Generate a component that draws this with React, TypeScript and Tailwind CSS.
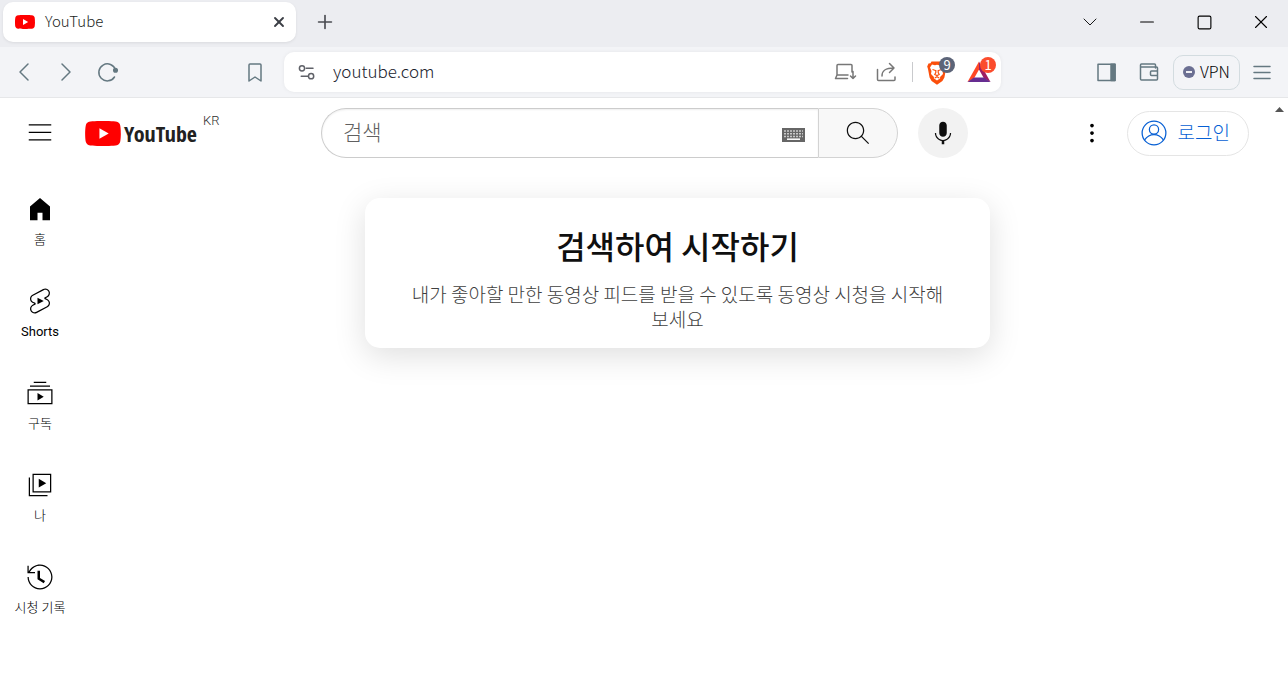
import type { ReactNode } from "react";
import { ChevronDown, Minus, Plus, Square, X } from "lucide-react";

const sideItems = [
  { label: "홈", weight: "font-light", path: "M4 21V10.08l8-6.96 8 6.96V21h-6v-6h-4v6H4z" },
  {
    label: "Shorts",
    weight: "font-normal",
    path: "M10 14.65v-5.3L15 12l-5 2.65zm7.77-4.33-1.2-.5L18 9.06c1.84-.96 2.53-3.23 1.56-5.06s-3.24-2.53-5.07-1.56L6 6.94c-1.29.68-2.07 2.04-2 3.49.07 1.42.93 2.67 2.22 3.25.03.01 1.2.5 1.2.5L6 14.93c-1.83.97-2.53 3.24-1.56 5.07.97 1.83 3.24 2.53 5.07 1.56l8.5-4.5c1.29-.68 2.06-2.04 1.99-3.49-.07-1.42-.94-2.68-2.23-3.25zm-.23 5.86-8.5 4.5c-1.34.71-3.01.2-3.72-1.14-.71-1.34-.2-3.01 1.14-3.72l2.04-1.08v-1.21l-.69-.28-1.11-.46c-.99-.41-1.65-1.35-1.7-2.41-.05-1.06.52-2.06 1.46-2.56l8.5-4.5c1.34-.71 3.01-.2 3.72 1.14.71 1.34.2 3.01-1.14 3.72L15.5 9.26v1.21l1.8.74c.99.41 1.65 1.35 1.7 2.41.05 1.06-.52 2.06-1.46 2.56z",
  },
  {
    label: "구독",
    weight: "font-light",
    path: "M10 18v-6l5 3-5 3zm7-15H7v1h10V3zm3 3H4v1h16V6zm2 3H2v12h20V9zM3 10h18v10H3V10z",
  },
  {
    label: "나",
    weight: "font-light",
    path: "m11 7 6 3.5-6 3.5V7zm7 13H4V6H3v15h15v-1zm3-2H6V3h15v15zM7 17h13V4H7v13z",
  },
  {
    label: "시청 기록",
    weight: "font-light",
    path: "M14.97 16.95 10 13.87V7h2v5.76l4.03 2.49-1.06 1.7zM22 12c0 5.51-4.49 10-10 10S2 17.51 2 12h1c0 4.96 4.04 9 9 9s9-4.04 9-9-4.04-9-9-9C8.81 3 5.92 4.64 4.28 7.38c-.11.18-.22.37-.31.56L3.94 8H8v1H1.96V3h1v4.74c.04-.09.07-.17.11-.25.11-.22.23-.42.35-.63C5.22 3.86 8.51 2 12 2c5.51 0 10 4.49 10 10z",
  },
];

function YtIcon({ path }: { path: string }) {
  return (
    <svg viewBox="0 0 24 24" className="w-[30px] h-[30px] shrink-0" fill="currentColor">
      <path d={path} />
    </svg>
  );
}

function PlayBadge({ className }: { className: string }) {
  return (
    <svg viewBox="0 0 28.57 20" className={className}>
      <path
        fill="#f00"
        d="M27.97 3.12C27.64 1.89 26.68.93 25.45.6 23.22 0 14.29 0 14.29 0S5.35 0 3.12.6C1.89.93.93 1.89.6 3.12 0 5.35 0 10 0 10s0 4.65.6 6.88c.33 1.23 1.29 2.19 2.52 2.52C5.35 20 14.29 20 14.29 20s8.93 0 11.16-.6c1.23-.33 2.19-1.29 2.52-2.52.6-2.23.6-6.88.6-6.88s0-4.65-.6-6.88z"
      />
      <path fill="#fff" d="M11.43 14.29 18.85 10l-7.42-4.28v8.57z" />
    </svg>
  );
}

function ToolIcon({ label, children }: { label: string; children: ReactNode }) {
  return (
    <button aria-label={label} className="w-6 h-6 shrink-0">
      <svg viewBox="0 0 24 24" className="w-6 h-6" fill="none" stroke="currentColor" strokeWidth="1.5" strokeLinecap="round" strokeLinejoin="round">
        {children}
      </svg>
    </button>
  );
}

function WindowButton({ label, children }: { label: string; children: ReactNode }) {
  return (
    <button aria-label={label} className="flex items-center justify-center w-5 h-5">
      {children}
    </button>
  );
}

function TabStrip() {
  return (
    <div className="flex items-center h-[47px] pb-[3px] pl-[3px] bg-[#ecedf1]">
      <div className="flex items-center w-[293px] h-10 pl-3 pr-[9px] rounded-[10px] bg-white shadow-[0_1px_3px_rgba(0,0,0,0.08)]">
        <PlayBadge className="w-5 h-[14px]" />
        <span className="ml-[10px] mb-[2px] flex-1 text-[15px] leading-5 text-[#1d1f25]">YouTube</span>
        <button aria-label="탭 닫기">
          <X className="w-4 h-4 text-[#3b3e45]" strokeWidth={2.8} />
        </button>
      </div>
      <button aria-label="새 탭" className="ml-[18px]">
        <Plus className="w-[22px] h-[22px] text-[#4a4c52]" strokeWidth={1.8} />
      </button>
      <div className="ml-auto mr-[17px] flex items-center gap-[37px] text-black">
        <WindowButton label="탭 검색">
          <ChevronDown className="w-6 h-6 shrink-0" strokeWidth={0.9} />
        </WindowButton>
        <WindowButton label="최소화">
          <Minus className="w-[22px] h-[22px] shrink-0" strokeWidth={1.2} />
        </WindowButton>
        <WindowButton label="최대화">
          <Square className="w-[17px] h-[17px]" strokeWidth={1.6} />
        </WindowButton>
        <WindowButton label="닫기">
          <X className="w-[22px] h-[22px] shrink-0" strokeWidth={1.2} />
        </WindowButton>
      </div>
    </div>
  );
}

function AddressBar() {
  return (
    <div className="flex items-center flex-1 min-w-0 h-10 pl-[11px] pr-1 rounded-[10px] bg-white text-[#777] shadow-[0_0_4px_rgba(0,0,0,0.06)]">
      <ToolIcon label="사이트 정보">
        <g stroke="#5f6168">
          <circle cx="7" cy="8.3" r="2.6" />
          <path d="M11.2 8.3H18M6.200 16.200H13" />
          <circle cx="16.1" cy="16.2" r="2.6" />
        </g>
      </ToolIcon>
      <input
        aria-label="주소"
        defaultValue="youtube.com"
        className="ml-[14px] mb-[2px] flex-1 min-w-0 text-[17px] leading-6 text-[#20222e] outline-none"
      />
      <div className="flex items-center gap-[18px]">
        <ToolIcon label="앱 설치">
          <path d="M19 12V5.500a1 1 0 0 0-1-1H5a1 1 0 0 0-1 1v9.500h11M4 15l-1.500 3.500h12M20 11.500v7M17.500 16l2.500 2.500 2.500-2.500" />
        </ToolIcon>
        <ToolIcon label="공유">
          <path d="M2.500 9.500v10a1 1 0 0 0 1 1h15.500a1 1 0 0 0 1-1V17M7 16c0-5.500 3-8 12-8M14.500 3.500 19 8l-4.500 4.500" />
        </ToolIcon>
      </div>
      <span className="ml-[13px] w-px h-5 bg-[#c9cacd]" />
      <button aria-label="Brave Shields" className="relative ml-3 w-[26px] h-[30px]">
        <svg viewBox="0 0 26 30" className="w-[26px] h-[30px]">
          <path fill="#fb4f0b" d="M6.500 4.500h10l2 1.800 2 .2 1.300 3-.8 2.500-1.600 8.500-2 3.500-5.400 3.800-5.400-3.800-2-3.500L3 12l-.8-2.500 1.300-3 2-.2z" />
          <path fill="#fff" d="m7 7.500 3 .8 2-.6 2 .6 3-.8 2 3-1.500 3.500.5 3-3 3 .2 1.200L12 23.600l-3.200-2.400.2-1.200-3-3 .5-3L5 10.500z" />
          <path fill="none" stroke="#fb4f0b" strokeWidth="1.200" d="m7.500 12.500 3 1M16.500 12.500l-3 1M10.800 13v2.500l-1 2 2.200 1 2.200-1-1-2V13M9.800 21l2.200-1.200 2.200 1.200" />
        </svg>
        <span className="absolute left-[14px] top-0 w-4 h-4 rounded-full bg-[#5c6478] text-white text-[13px] leading-[15px] font-normal text-center">9</span>
      </button>
      <button aria-label="Brave Rewards" className="relative ml-4 w-[30px] h-[30px]">
        <svg viewBox="0 0 30 30" className="w-[30px] h-[30px]">
          <path fill="#ff4724" d="M12 4.500.500 25l6.500-3.500 5-9z" />
          <path fill="#9e1f63" d="M12 4.500 23.500 25 17 21.500l-5-9z" />
          <path fill="#662d91" d="M.500 25h23L17 20.500H7z" />
        </svg>
        <span className="absolute left-[13px] top-0 w-4 h-4 rounded-full bg-[#fb4c2d] text-white text-[13px] leading-[15px] font-normal text-center">1</span>
      </button>
    </div>
  );
}

function Toolbar() {
  return (
    <div className="flex items-center h-[51px] border-b border-[#e6e7e9] bg-[#f3f4f7] text-[#647881]">
      <div className="flex items-center w-[284px] shrink-0 pl-3 pr-[17px]">
        <ToolIcon label="뒤로">
          <path d="m16 4-8 8 8 8" />
        </ToolIcon>
        <span className="w-[18px]" />
        <ToolIcon label="앞으로">
          <path d="m8 4 8 8-8 8" />
        </ToolIcon>
        <span className="w-[18px]" />
        <ToolIcon label="새로고침">
          <path d="M18.500 17a8.500 8.500 0 1 1 1-7" />
          <circle cx="19.500" cy="10.300" r="1.800" fill="currentColor" />
        </ToolIcon>
        <span className="flex-1" />
        <ToolIcon label="북마크">
          <path d="M6 21V5a1 1 0 0 1 1-1h10a1 1 0 0 1 1 1v16l-6-4z" />
        </ToolIcon>
      </div>
      <AddressBar />
      <div className="flex items-center justify-end w-[287px] shrink-0 pr-[14px]">
        <ToolIcon label="사이드바">
          <path d="M3 4.200h17v16.300H3z" />
          <path fill="currentColor" d="M16 4.200h4v16.300h-4z" />
        </ToolIcon>
        <span className="w-[18px]" />
        <ToolIcon label="지갑">
          <path d="M18.500 8V5a1 1 0 0 0-1-1h-13a1 1 0 0 0-1 1v14a1 1 0 0 0 1 1h15a1 1 0 0 0 1-1V8a1 1 0 0 0-1-1H4M20.500 11h-6a1 1 0 0 0-1 1v2.500a1 1 0 0 0 1 1h6" />
        </ToolIcon>
        <button className="ml-3 mr-[10px] flex items-center gap-[5px] w-[67px] h-[35px] pl-[9px] rounded-[10px] border border-[#d3dce0] text-base leading-5 text-black">
          <svg viewBox="0 0 12 12" className="w-3 h-3 shrink-0">
            <circle cx="6" cy="6" r="6" fill="#6b6f92" />
            <path d="M3 6h6" stroke="#fff" strokeWidth="1.800" />
          </svg>
          <span className="mb-[2px]">VPN</span>
        </button>
        <ToolIcon label="메뉴">
          <path d="M4 6.500h16M4 12.500h16M4 18.500h16" />
        </ToolIcon>
      </div>
    </div>
  );
}

function SiteHeader() {
  return (
    <header className="flex items-center h-[70px]">
      <div className="flex items-center w-[321px] shrink-0 pl-[25px]">
        <button aria-label="가이드">
          <YtIcon path="M21 6H3V5h18v1zm0 5H3v1h18v-1zm0 6H3v1h18v-1z" />
        </button>
        <a href="#home" className="ml-[30px] flex items-center gap-[3px]">
          <PlayBadge className="w-9 h-[25px]" />
          <span className="font-['Noto_Sans_ExtraCondensed','Open_Sans_Condensed','Liberation_Sans_Narrow','Roboto_Condensed',sans-serif] text-[22px] leading-[26px] font-bold text-[#212121]">YouTube</span>
        </a>
        <span className="ml-[6px] mb-6 font-['Roboto',sans-serif] text-[13px] leading-4 font-light text-[#303030]">KR</span>
      </div>
      <div className="flex items-center flex-1 max-w-[647px]">
        <form className="flex flex-1 h-[50px]">
          <label className="flex flex-1 items-center pl-[21px] pr-[13px] rounded-l-full border border-r-0 border-[#ccc] shadow-[inset_0_1px_2px_#eee]">
            <input aria-label="검색" placeholder="검색" className="mb-1 flex-1 min-w-0 text-[21px] leading-[30px] outline-none placeholder:text-[#606060]" />
            <svg viewBox="0 0 23 14" className="w-[23px] h-[14px] mt-1">
              <path fill="#666" d="M0 0h23v14H0z" />
              <path stroke="#fff" strokeWidth="1.500" strokeDasharray="2 1" d="M2 3h19M2 5.800h19M2 8.500h19" opacity=".65" />
              <path stroke="#fff" strokeWidth="1.500" d="M5 11.200h13" />
            </svg>
          </label>
          <button aria-label="검색 실행" className="flex items-center justify-center w-20 rounded-r-full border border-[#d3d3d3] bg-[#f8f8f8] text-[#0f0f0f]">
            <YtIcon path="m20.870 20.170-5.590-5.590C16.350 13.350 17 11.750 17 10c0-3.870-3.130-7-7-7s-7 3.130-7 7 3.130 7 7 7c1.750 0 3.350-.65 4.580-1.710l5.590 5.590.7-.71zM10 16c-3.310 0-6-2.690-6-6s2.690-6 6-6 6 2.690 6 6-2.690 6-6 6z" />
          </button>
        </form>
        <button aria-label="음성으로 검색" className="ml-5 flex items-center justify-center w-[50px] h-[50px] rounded-full bg-[#f2f2f2] text-[#0f0f0f]">
          <YtIcon path="M12 3c-1.660 0-3 1.370-3 3.070v5.860C9 13.630 10.340 15 12 15s3-1.370 3-3.070V6.070C15 4.370 13.660 3 12 3zm6.500 9h-1c0 3.030-2.470 5.500-5.500 5.500S6.500 15.030 6.500 12h-1c0 3.240 2.390 5.930 5.500 6.410V21h2v-2.590c3.110-.48 5.500-3.170 5.500-6.410z" />
        </button>
      </div>
      <div className="flex items-center gap-5 ml-auto pr-[22px]">
        <button aria-label="설정">
          <YtIcon path="M12 16.500c.83 0 1.500.67 1.500 1.500s-.67 1.500-1.500 1.500-1.500-.67-1.500-1.500.67-1.500 1.500-1.500zM10.500 12c0 .83.67 1.500 1.500 1.500s1.500-.67 1.500-1.500-.67-1.500-1.500-1.500-1.500.67-1.500 1.500zm0-6c0 .83.67 1.500 1.500 1.500s1.500-.67 1.500-1.500-.67-1.500-1.500-1.500-1.500.67-1.500 1.500z" />
        </button>
        <a href="#login" className="flex items-center gap-[9px] h-[45px] pl-[11px] pr-[18px] rounded-full border border-[#e5e5e5] text-[#065fd4] text-[19px] leading-6">
          <svg viewBox="0 0 24 24" className="w-[30px] h-[30px]" fill="none" stroke="currentColor">
            <circle cx="12" cy="12" r="9.500" />
            <circle cx="12" cy="9.200" r="3.700" />
            <path d="M4.500 17.500C6.500 14.500 9 13.200 12 13.200s5.500 1.300 7.500 4.300" />
          </svg>
          <span className="mb-[2px]">로그인</span>
        </a>
      </div>
    </header>
  );
}

export default function App() {
  return (
    <div className="flex flex-col min-h-screen bg-white font-['Noto_Sans_CJK_KR',sans-serif] font-light">
      <TabStrip />
      <Toolbar />
      <div className="flex flex-1">
        <div className="flex-1 min-w-0">
          <SiteHeader />
          <div className="flex">
            <nav className="w-20 shrink-0 pt-[6px]">
              {sideItems.map((item) => (
                <a
                  key={item.label}
                  href="#"
                  className="flex flex-col items-center h-[92px] pt-5 gap-[7px] font-['Roboto','Noto_Sans_CJK_KR',sans-serif] text-[13px] leading-[18px] text-black"
                >
                  <YtIcon path={item.path} />
                  <span className={item.weight}>{item.label}</span>
                </a>
              ))}
            </nav>
            <main className="flex-1 pt-[30px] pl-1">
              <section className="max-w-[625px] mx-auto px-10 pt-[29px] pb-[17px] rounded-[15px] bg-white text-center shadow-[0_8px_32px_rgba(0,0,0,0.13)]">
                <h1 className="text-[32px] leading-9 font-medium text-[#0f0f0f]">검색하여 시작하기</h1>
                <p className="mt-[18px] text-[19px] leading-[25px] text-[#404040]">
                  내가 좋아할 만한 동영상 피드를 받을 수 있도록 동영상 시청을 시작해보세요
                </p>
              </section>
            </main>
          </div>
        </div>
        <div className="w-[17px] pt-[9px]">
          <svg viewBox="0 0 9 5" className="w-[9px] h-[5px] mx-auto">
            <path fill="#555" d="M0 5 4.500 0 9 5z" />
          </svg>
        </div>
      </div>
    </div>
  );
}
